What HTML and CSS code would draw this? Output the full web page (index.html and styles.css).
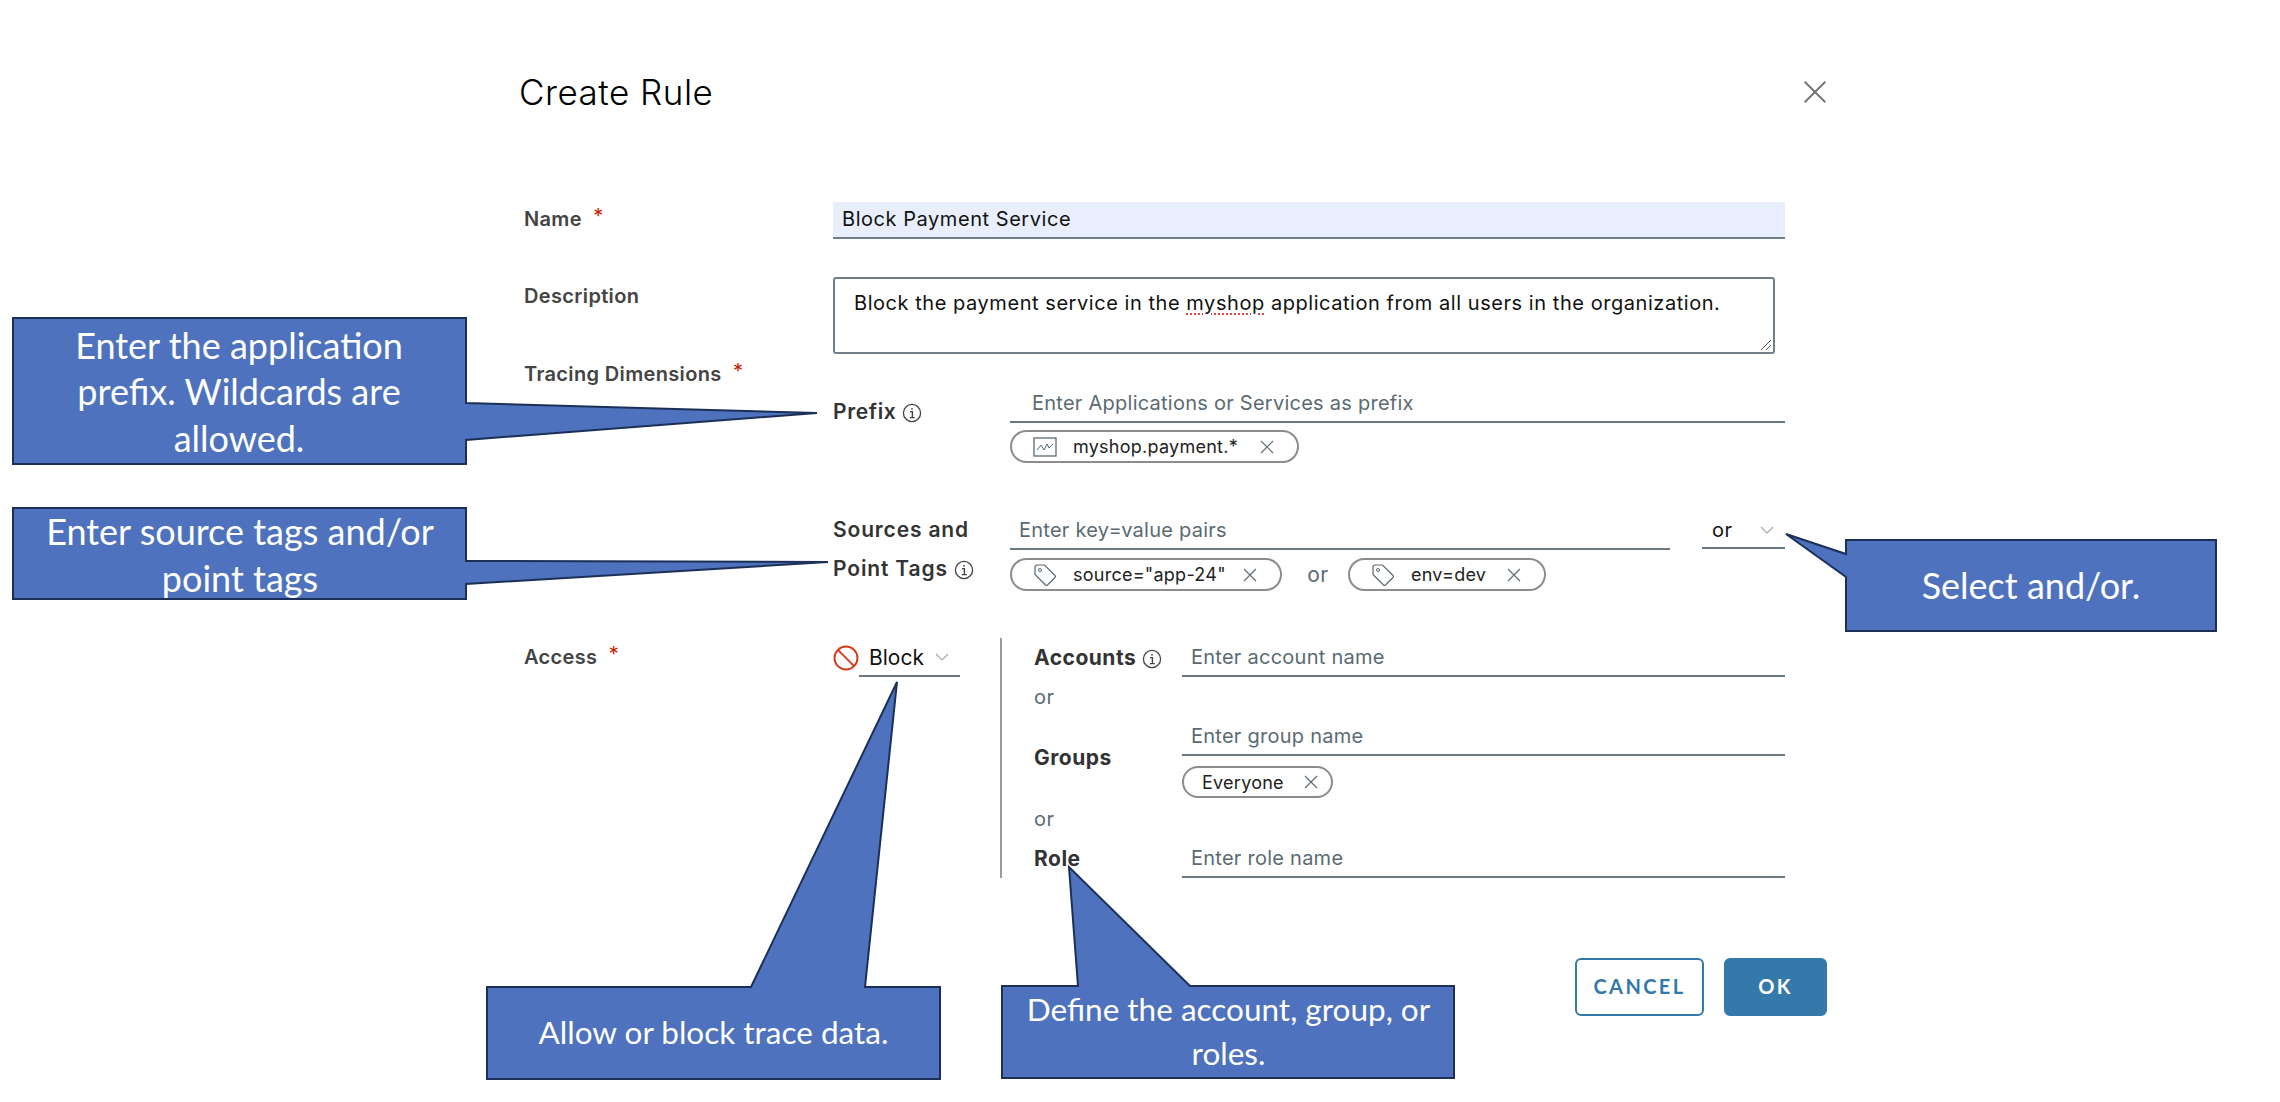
FILE: index.html
```html
<!DOCTYPE html>
<html lang="en">
<head>
<meta charset="utf-8">
<title>Create Rule</title>
<link rel="stylesheet" href="styles.css">
</head>
<body>
<svg class="sprite" aria-hidden="true">
  <symbol id="x" viewBox="0 0 14 14"><path d="M1 1 13 13M13 1 1 13" fill="none" stroke="currentColor" stroke-width="1.1"/></symbol>
  <symbol id="chev" viewBox="0 0 14 8"><path d="M1 1 7 7 13 1" fill="none" stroke="currentColor" stroke-width="1.2"/></symbol>
  <symbol id="info" viewBox="0 0 20 20"><circle cx="10" cy="10" r="8.6" fill="none" stroke="currentColor" stroke-width="1.3"/><path d="M8 8.6h2.4v6M7.8 14.6h5M10 5v1.8" fill="none" stroke="currentColor" stroke-width="1.4"/></symbol>
  <symbol id="chart" viewBox="0 0 24 20"><rect x="1" y="1" width="22" height="18" fill="none" stroke="currentColor" stroke-width="1.3"/><path d="M4 13 8 8l3 5 3-6 2 4 4-4" fill="none" stroke="currentColor" stroke-width="1"/></symbol>
  <symbol id="tag" viewBox="0 0 24 24"><path d="M2 3.5 3.500 2h8L22 12.500a1.500 1.500 0 0 1 0 2L14.500 22a1.500 1.500 0 0 1-2 0L2 11.500Z" fill="none" stroke="currentColor" stroke-width="1.200"/><circle cx="7" cy="7" r="1.500" fill="none" stroke="currentColor" stroke-width="1"/></symbol>
</svg>

<main class="dialog">
  <header class="head">
    <h1 class="title">Create Rule</h1>
    <svg class="close"><use href="#x"/></svg>
  </header>

  <div class="row row-name">
    <div class="label label-name">Name <span class="req">*</span></div>
    <div class="field-name">Block Payment Service</div>
  </div>

  <div class="row row-desc">
    <div class="label label-desc">Description</div>
    <div class="textarea">Block the payment service in the <span class="typo">myshop</span> application from all users in the organization.
      <svg class="grip" viewBox="0 0 12 12"><path d="M11 1 1 11M11 6 6 11" fill="none" stroke="#555" stroke-width="1"/></svg>
    </div>
  </div>

  <div class="label label-tracing">Tracing Dimensions <span class="req">*</span></div>

  <div class="dims">
    <div class="dim-label dim-prefix">Prefix <svg class="info"><use href="#info"/></svg></div>
    <div class="dim-body">
      <div class="input input-prefix">Enter Applications or Services as prefix</div>
      <div class="chips chips-prefix">
        <span class="chip chip-myshop"><svg class="chip-chart"><use href="#chart"/></svg><span class="chip-text">myshop.payment.*</span><svg class="chip-x"><use href="#x"/></svg></span>
      </div>
    </div>
  </div>

  <div class="dims dims-src">
    <div class="dim-label dim-src">Sources and<br>Point Tags <svg class="info"><use href="#info"/></svg></div>
    <div class="dim-body">
      <div class="src-top">
        <div class="input input-src">Enter key=value pairs</div>
        <div class="select select-or"><span>or</span><svg class="chev"><use href="#chev"/></svg></div>
      </div>
      <div class="chips chips-src">
        <span class="chip chip-source"><svg class="chip-tag"><use href="#tag"/></svg><span class="chip-text">source="app-24"</span><svg class="chip-x"><use href="#x"/></svg></span>
        <span class="or-inline">or</span>
        <span class="chip chip-env"><svg class="chip-tag"><use href="#tag"/></svg><span class="chip-text">env=dev</span><svg class="chip-x"><use href="#x"/></svg></span>
      </div>
    </div>
  </div>

  <div class="row row-access">
    <div class="label label-access">Access <span class="req">*</span></div>
    <div class="block-col">
      <svg class="block-icon" viewBox="0 0 24 24"><circle cx="12" cy="12" r="10.600" fill="none" stroke="#d8391c" stroke-width="1.800"/><path d="M4.500 4.500 19.500 19.500" stroke="#d8391c" stroke-width="1.800"/></svg>
      <div class="select select-block"><span>Block</span><svg class="chev"><use href="#chev"/></svg></div>
    </div>
    <div class="targets">
      <div class="target">
        <div class="target-label">Accounts <svg class="info"><use href="#info"/></svg></div>
        <div class="target-body"><div class="input input-target">Enter account name</div></div>
      </div>
      <div class="or-line">or</div>
      <div class="target">
        <div class="target-label">Groups</div>
        <div class="target-body">
          <div class="input input-target">Enter group name</div>
          <div class="chips chips-group"><span class="chip chip-everyone"><span class="chip-text">Everyone</span><svg class="chip-x"><use href="#x"/></svg></span></div>
        </div>
      </div>
      <div class="or-line or-line-2">or</div>
      <div class="target">
        <div class="target-label">Role</div>
        <div class="target-body"><div class="input input-target">Enter role name</div></div>
      </div>
    </div>
  </div>

  <footer class="actions">
    <button class="btn btn-cancel">CANCEL</button>
    <button class="btn btn-ok">OK</button>
  </footer>
</main>

<svg class="callout-shapes" viewBox="0 0 2280 1102" aria-hidden="true">
  <polygon points="13,318 466,318 466,403 817,413 466,440 466,464 13,464"/>
  <polygon points="13,508 466,508 466,561 828,562 466,584 466,599 13,599"/>
  <polygon points="1846,540 2216,540 2216,631 1846,631 1846,577 1786,534 1846,554"/>
  <polygon points="487,987 751,987 897,682 865,987 940,987 940,1079 487,1079"/>
  <polygon points="1002,986 1078,986 1069,867 1190,986 1454,986 1454,1078 1002,1078"/>
</svg>
<div class="callout c-prefix">Enter the application prefix. Wildcards are allowed.</div>
<div class="callout c-tags">Enter source tags and/or point tags</div>
<div class="callout c-select">Select and/or.</div>
<div class="callout c-allow">Allow or block trace data.</div>
<div class="callout c-define">Define the account, group, or roles.</div>
</body>
</html>
```

FILE: styles.css
```css
* { box-sizing: border-box; }
html, body { margin: 0; height: 100%; }
body {
  position: relative;
  width: 2280px;
  height: 1102px;
  overflow: hidden;
  background: #fff;
  font-family: "Inter", "Noto Sans", sans-serif;
  font-size: 20px;
  letter-spacing: .55px;
  color: #111;
}
.sprite { display: none; }

.dialog { width: 1309px; margin-left: 518px; }

.head {
  display: flex;
  justify-content: space-between;
  align-items: center;
  height: 44px;
}
body::before { content: ""; display: block; height: 70px; }
.title { margin: 0 0 0 1px; font-size: 35px; font-weight: 300; letter-spacing: .5px; color: #000; }
.close { width: 24px; height: 24px; color: #747474; }

.row { display: flex; }
.label { width: 315px; padding-left: 6px; font-weight: 600; letter-spacing: .35px; color: #444; flex: none; }
.req { color: #c92100; font-weight: 400; margin-left: 6px; position: relative; top: -3px; }

.row-name { margin-top: 88px; align-items: center; }
.label-name { padding-bottom: 3px; }
.field-name {
  width: 952px;
  height: 37px;
  padding-left: 9px;
  line-height: 34px;
  background: #e8eefb;
  border-bottom: 2px solid #6d7f88;
}

.row-desc { margin-top: 38px; }
.label-desc { padding-top: 7px; }
.textarea {
  position: relative;
  width: 942px;
  height: 77px;
  padding: 11px 19px;
  line-height: 26px;
  border: 2px solid #737f86;
  border-radius: 3px;
}
.typo { text-decoration: underline dotted #e0453a; text-underline-offset: 3px; }
.grip { position: absolute; right: 1px; bottom: 1px; width: 12px; height: 12px; }

.label-tracing { margin-top: 8px; height: 23px; line-height: 24px; width: auto; }

.dims { display: flex; margin-left: 315px; width: 952px; }
.dim-label { width: 177px; flex: none; font-weight: 600; color: #333; font-size: 21px; letter-spacing: .65px; }
.dim-src { letter-spacing: .85px; }
.dim-prefix { padding-top: 14px; }
.info { width: 20px; height: 20px; color: #444; vertical-align: -4px; }
.dim-body { flex: 1; min-width: 0; }

.input {
  height: 38px;
  line-height: 36px;
  letter-spacing: .25px;
  border-bottom: 2px solid #6b7a82;
  color: #5a6a73;
}
.input-prefix { padding-left: 22px; }

.chips { display: flex; align-items: center; }
.chips-prefix { margin-top: 7px; }
.chip {
  display: inline-flex;
  align-items: center;
  height: 33px;
  border: 2px solid #8c8c8c;
  border-radius: 17px;
  font-size: 18px;
  letter-spacing: .25px;
  color: #222;
  flex: none;
}
.chip-myshop { width: 289px; padding-left: 21px; }
.chip-chart { width: 24px; height: 20px; color: #5a6a73; margin-right: 16px; }
.chip-tag { width: 24px; height: 24px; color: #5a6a73; margin-right: 16px; }
.chip-text { white-space: nowrap; }
.chip-x { width: 14px; height: 14px; color: #5a6a73; margin-left: auto; }
.chip-myshop .chip-x { margin-right: 23px; }

.dims-src { margin-top: 49px; }
.dim-src { margin-top: -2px; line-height: 39px; }
.src-top { display: flex; justify-content: space-between; }
.input-src { width: 660px; padding-left: 9px; }
.select {
  display: flex;
  align-items: center;
  height: 38px;
  border-bottom: 2px solid #6b7a82;
  color: #111;
}
.select-or { width: 83px; padding-left: 10px; height: 37px; }
.chev { width: 14px; height: 8px; color: #a9a9a9; margin-left: auto; }
.select-or .chev { margin-right: 11px; }

.chips-src { margin-top: 8px; }
.chip-source { width: 272px; padding-left: 21px; }
.chip-source .chip-x { margin-right: 23px; }
.or-inline { width: 66px; padding-left: 6px; text-align: center; color: #5a6a73; font-size: 21px; }
.chip-env { width: 198px; padding-left: 21px; }
.chip-env .chip-x { margin-right: 23px; }

.row-access { margin-top: 47px; }
.label-access { padding-top: 7px; }
.block-col { width: 167px; flex: none; display: flex; align-items: flex-start; height: 39px; padding-top: 7px; }
.block-icon { width: 26px; height: 26px; flex: none; }
.select-block { width: 101px; height: 33px; margin-top: -1px; padding: 0 0 5px 10px; font-size: 21px; letter-spacing: 0; }
.select-block .chev { margin-right: 11px; }

.targets { width: 785px; padding: 1px 0 0 32px; border-left: 2px solid #9a9a9a; }
.target { display: flex; align-items: center; }
.target-label { width: 148px; padding-bottom: 2px; flex: none; font-weight: 700; font-size: 21px; letter-spacing: .5px; color: #333; }
.target-body { flex: 1; }
.input-target { padding-left: 9px; }
.chips-group { margin-top: 10px; }
.chip-everyone { width: 151px; height: 32px; padding-left: 18px; }
.chip-everyone .chip-x { margin-right: 13px; }
.or-line { height: 41px; line-height: 41px; color: #5a6a73; }
.or-line-2 { height: 42px; line-height: 42px; }

.actions { display: flex; justify-content: flex-end; gap: 20px; margin-top: 80px; }
.btn {
  height: 58px;
  padding: 0 0 2px;
  border-radius: 6px;
  font-family: "Lato", sans-serif;
  font-size: 20px;
  font-weight: 700;
  letter-spacing: 2.4px;
  border: 2px solid #3379a9;
}
.btn-cancel { width: 129px; background: #fff; color: #3379a9; }
.btn-ok { width: 103px; background: #3379a9; color: #fff; }

.callout-shapes { position: absolute; left: 0; top: 0; width: 2280px; height: 1102px; pointer-events: none; }
.callout-shapes polygon { fill: #4e72bd; stroke: #1c3057; stroke-width: 2; }

.callout {
  position: absolute;
  display: flex;
  align-items: center;
  justify-content: center;
  text-align: center;
  color: #fff;
  font-family: "Lato", sans-serif;
  font-size: 36px;
  letter-spacing: 0;
  line-height: 46.5px;
}
.c-prefix { left: 40px; top: 322px; width: 398px; height: 139px; }
.c-tags { left: 20px; top: 508px; width: 440px; height: 93px; }
.c-select { left: 1846px; top: 539px; width: 370px; height: 92px; }
.c-allow { left: 487px; top: 986px; width: 453px; height: 92px; font-size: 31.5px; }
.c-define { left: 1003px; top: 985px; width: 451px; height: 92px; font-size: 31.5px; line-height: 44px; }
```
